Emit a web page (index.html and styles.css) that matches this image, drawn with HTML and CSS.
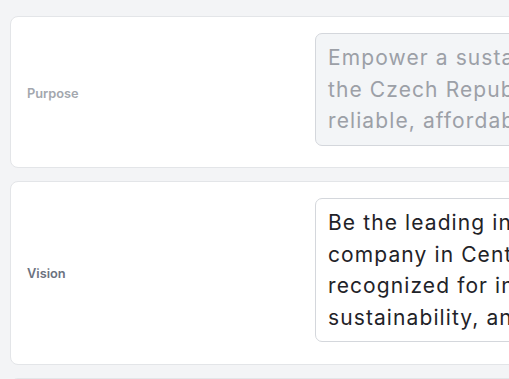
FILE: index.html
```html
<!DOCTYPE html>
<html lang="en">
<head>
<meta charset="utf-8">
<title>Company profile</title>
<link rel="stylesheet" href="styles.css">
</head>
<body>
<main class="page">
  <section class="card">
    <label class="field-label field-label--muted">Purpose</label>
    <div class="field field--disabled">Empower a sustainable future for
the Czech Republic by delivering
reliable, affordable and clean energy.</div>
  </section>
  <section class="card">
    <label class="field-label">Vision</label>
    <div class="field">Be the leading integrated energy
company in Central Europe,
recognized for innovation,
sustainability, and customer trust.</div>
  </section>
  <section class="card">
    <label class="field-label">Mission</label>
    <div class="field">Deliver energy solutions.</div>
  </section>
</main>
</body>
</html>
```
FILE: styles.css
```css
html, body {
  margin: 0;
  padding: 0;
  background: #f3f4f6;
  overflow: hidden;
}
body {
  font-family: "Inter", "Liberation Sans", sans-serif;
}
.page {
  display: flex;
  flex-direction: column;
  gap: 13px;
  padding: 16px 0 0 10px;
  width: 900px;
}
.card {
  display: grid;
  grid-template-columns: 288px 1fr;
  align-items: center;
  background: #ffffff;
  border: 1px solid #e3e5e8;
  border-radius: 8px;
  padding: 16px 16px 14px 16px;
}
.field-label {
  font-size: 12.8px;
  font-weight: 600;
  color: #6b7280;
}
.field-label--muted {
  color: #a3a7ae;
}
.field {
  white-space: pre-line;
  font-size: 21px;
  line-height: 31.5px;
  letter-spacing: 1.1px;
  color: #1f2328;
  background: #ffffff;
  border: 1px solid #d4d7dc;
  border-radius: 7px;
  padding: 8px 12px;
  margin-bottom: 7.5px;
}
.field--disabled {
  background: #f3f5f7;
  color: #9ca0a7;
}
```
